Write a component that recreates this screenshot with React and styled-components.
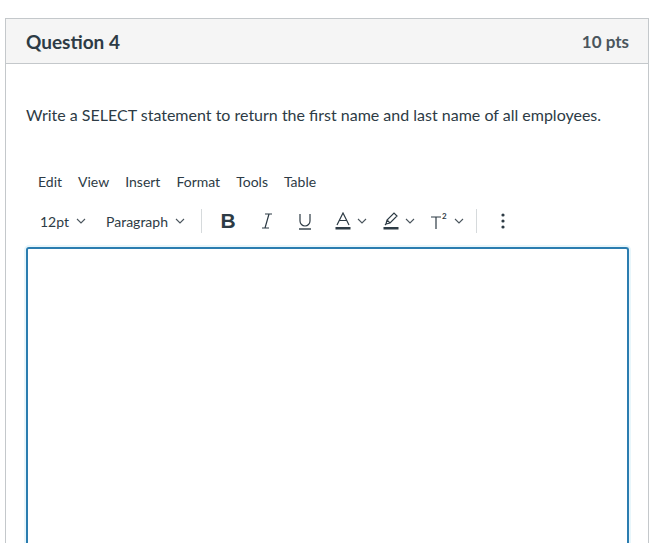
import React from "react";
import styled, { createGlobalStyle } from "styled-components";

const Global = createGlobalStyle`
  html, body { margin: 0; padding: 0; background: #fff; }
  body { font-family: Lato, "Noto Sans", sans-serif; color: #2d3b45; overflow: hidden; }
`;

const Page = styled.div`
  padding: 18px 5px 0 5px;
  height: 543px;
  box-sizing: border-box;
`;

const Card = styled.div`
  width: 644px;
  height: 540px;
  box-sizing: border-box;
  border: 1px solid #c4c8cb;
  border-bottom: none;
  display: flex;
  flex-direction: column;
`;

const Header = styled.div`
  height: 45px;
  box-sizing: border-box;
  background: #f5f5f5;
  border-bottom: 1px solid #c4c8cb;
  display: flex;
  align-items: center;
  justify-content: space-between;
  padding: 0 19px 0 20px;
  font-weight: 700;
`;

const Title = styled.span`
  color: #2d3b45;
  font-size: 19px;
`;

const Points = styled.span`
  color: #4a555d;
  font-size: 17px;
`;

const Body = styled.div`
  padding: 41px 18px 0 20px;
  flex: 1;
  display: flex;
  flex-direction: column;
`;

const Prompt = styled.p`
  margin: 0;
  font-size: 16px;
  line-height: 20px;
  color: #2d3b45;
`;

const MenuBar = styled.div`
  display: flex;
  margin-top: 47px;
  padding-left: 4px;
`;

const MenuItem = styled.span`
  font-size: 14px;
  color: #2d3b45;
  padding: 0 8px;
  line-height: 20px;
`;

const Toolbar = styled.div`
  display: flex;
  align-items: center;
  height: 38px;
  margin-top: 10px;
  padding-left: 14px;
`;

const Drop = styled.div`
  display: flex;
  align-items: center;
  gap: 7px;
  font-size: 14px;
  color: #2d3b45;
  margin-right: ${p => p.$mr || 0}px;
`;

const Sep = styled.div`
  width: 1px;
  height: 24px;
  background: #d6dadc;
  margin: 0 ${p => p.$r || 0}px 0 ${p => p.$l || 0}px;
`;

const Btn = styled.div`
  display: flex;
  align-items: center;
  justify-content: center;
  gap: 6px;
  width: ${p => p.$w || 38}px;
  height: 30px;
  color: #2d3b45;
`;

const BoldGlyph = styled.span`
  font-family: "Liberation Sans", Arial, sans-serif;
  font-weight: 700;
  font-size: 21px;
  line-height: 24px;
  color: #2d3b45;
`;

const Editor = styled.div`
  margin-top: 7px;
  width: 603px;
  flex: 1;
  box-sizing: border-box;
  border: 2px solid #2b7db0;
  border-bottom: none;
  border-radius: 3px 3px 0 0;
  box-shadow: 0 0 0 2px #e8f6fb;
`;

const Chevron = () => (
  <svg width="10" height="6" viewBox="0 0 10 6" fill="none" stroke="#4a555d" strokeWidth="1.1">
    <path d="M1 1l4 4 4-4" />
  </svg>
);

export default function App() {
  return (
    <>
      <Global />
      <Page>
        <Card>
          <Header>
            <Title>Question 4</Title>
            <Points>10 pts</Points>
          </Header>
          <Body>
            <Prompt>Write a SELECT statement to return the first name and last name of all employees.</Prompt>
            <MenuBar>
              <MenuItem>Edit</MenuItem>
              <MenuItem>View</MenuItem>
              <MenuItem>Insert</MenuItem>
              <MenuItem>Format</MenuItem>
              <MenuItem>Tools</MenuItem>
              <MenuItem>Table</MenuItem>
            </MenuBar>
            <Toolbar>
              <Drop $mr={20}>12pt <Chevron /></Drop>
              <Drop>Paragraph <Chevron /></Drop>
              <Sep $l={16} $r={6} />
              <Btn $w={40}>
                <BoldGlyph>B</BoldGlyph>
              </Btn>
              <Btn $w={38}>
                <svg width="14" height="18" viewBox="0 0 14 18" fill="none" stroke="#2d3b45" strokeWidth="1.2">
                  <path d="M5 2h7M2 16h7M9 2L5 16" />
                </svg>
              </Btn>
              <Btn $w={38}>
                <svg width="16" height="18" viewBox="0 0 16 18" fill="none" stroke="#2d3b45" strokeWidth="1.2">
                  <path d="M3 2v7a5 5 0 0 0 10 0V2" />
                  <path d="M2 17h12" strokeWidth="1.4" />
                </svg>
              </Btn>
              <Btn $w={54}>
                <svg width="16" height="18" viewBox="0 0 16 18" fill="none" stroke="#2d3b45" strokeWidth="1.2">
                  <path d="M2 13L8 1l6 12M4.5 8.5h7" />
                  <rect x="0.5" y="15" width="15" height="2.5" fill="#2d3b45" stroke="none" />
                </svg>
                <Chevron />
              </Btn>
              <Btn $w={42}>
                <svg width="16" height="18" viewBox="0 0 16 18" fill="none" stroke="#2d3b45" strokeWidth="1.2">
                  <path d="M3 12l1-4 7-7 3 3-7 7z M4 8l3 3 M2 13l1-1" />
                  <rect x="0.5" y="15" width="15" height="2.5" fill="#2d3b45" stroke="none" />
                </svg>
                <Chevron />
              </Btn>
              <Btn $w={54}>
                <svg width="18" height="18" viewBox="0 0 18 18" fill="none" stroke="#2d3b45" strokeWidth="1.2">
                  <path d="M1 5h10M6 5v12" />
                  <text x="12" y="7" fontFamily="Lato, sans-serif" fontSize="8" fontWeight="700" fill="#2d3b45" stroke="none">2</text>
                </svg>
                <Chevron />
              </Btn>
              <Sep $l={2} $r={14} />
              <Btn $w={24}>
                <svg width="4" height="16" viewBox="0 0 4 16" fill="#2d3b45">
                  <circle cx="2" cy="2" r="1.6" />
                  <circle cx="2" cy="8" r="1.6" />
                  <circle cx="2" cy="14" r="1.6" />
                </svg>
              </Btn>
            </Toolbar>
            <Editor />
          </Body>
        </Card>
      </Page>
    </>
  );
}
